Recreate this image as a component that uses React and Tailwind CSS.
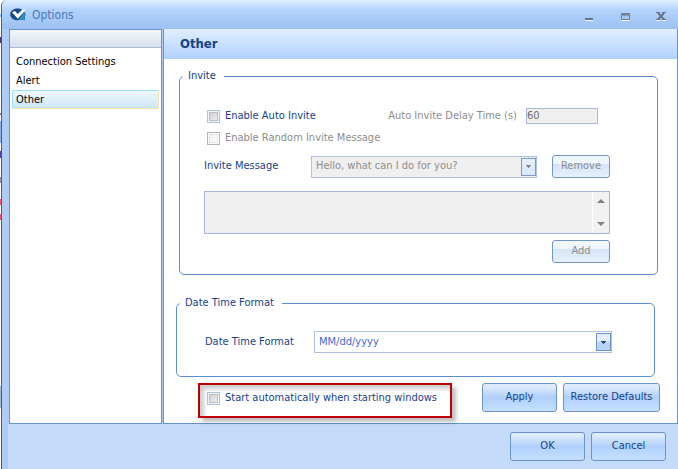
import React, { useState } from "react";
import clsx from "clsx";

const SECTIONS = ["Connection Settings", "Alert", "Other"];

// slivers of the window lying behind this one
const BACKDROP = [
    "h-[14px] bg-white",
    "h-[3px] bg-blue-300",
    "h-[20px] bg-white",
    "h-[6px] bg-[#4a3a6a]",
    "h-[70px] bg-white",
    "h-[2px] bg-[#7a8898]",
    "h-[6px] bg-white",
    "h-[22px] bg-[#8fb4e8]",
    "h-[8px] bg-white",
    "h-[7px] bg-[#4a3fb0]",
    "h-[19px] bg-white",
    "h-[6px] bg-[#8e959e]",
    "h-[16px] bg-white",
    "h-[6px] bg-[#ef5a70]",
    "h-[9px] bg-white",
    "h-[6px] bg-[#ef5a70]",
    "h-[166px] bg-white",
    "h-[22px] bg-[#a9bddb]",
    "grow bg-white",
];

function Logo() {
    return (
        <svg width="16" height="14" viewBox="0 0 16 14" aria-hidden="true">
            <path
                d="M7.500 .6C3.400 .6 .3 3 .3 6.400s3.100 5.800 7.200 5.800c1.300 0 2.500-.2 3.500-.6l4 .7-.4-3c.5-.9 .8-1.900 .8-2.900C15.400 3 11.600 .6 7.500 .6z"
                fill="#174a88"
            />
            <path
                d="M8.500 12.100c1-.1 1.800-.3 2.500-.5l4 .7-.4-3c.6-1 .8-2 .8-2.900 0-1.200-.4-2.200-1-3z"
                fill="#2f8fbd"
            />
            <path
                d="M2 4.300l3-1.200 2.700 3L13 1l2.400 1.300-7.600 8.400z"
                fill="#fff"
            />
        </svg>
    );
}

function TitleBar() {
    return (
        <header className="flex h-[29px] shrink-0 items-center bg-linear-to-b from-[#e2effe] via-[#b2d2fe] via-35% to-[#9cc0f0] pr-[9px] pl-2">
            <Logo />
            <h1 className="ml-[6px] text-[12px] leading-4 text-[#4a78c0]">
                Options
            </h1>
            <div className="ml-auto flex items-center gap-5">
                <button aria-label="Minimize" className="h-4 w-4">
                    <svg width="16" height="16" shapeRendering="crispEdges">
                        <rect x="4" y="11" width="8" height="2" fill="#68748a" />
                        <rect x="4" y="13" width="8" height="1" fill="#f4f8ff" />
                    </svg>
                </button>
                <button aria-label="Maximize" className="h-4 w-4">
                    <svg width="16" height="16" shapeRendering="crispEdges">
                        <rect x="4" y="6" width="9" height="7" fill="#74829a" />
                        <rect x="5" y="9" width="7" height="3" fill="#a6c6f2" />
                        <rect x="5" y="8" width="7" height="1" fill="#8d9bb0" />
                        <rect x="4" y="13" width="9" height="1" fill="#f4f8ff" />
                    </svg>
                </button>
                <button aria-label="Close" className="h-4 w-4">
                    <svg width="16" height="16" viewBox="0 0 16 16">
                        <path
                            d="M3 13.500h4M9 13.500h4"
                            stroke="#f4f8ff"
                        />
                        <path
                            d="M5 6l6 6.500M11 6l-6 6.500"
                            stroke="#68748a"
                            strokeWidth="2"
                        />
                        <path
                            d="M3 5.500h4M9 5.500h4M3 12.500h4M9 12.500h4"
                            stroke="#68748a"
                        />
                    </svg>
                </button>
            </div>
        </header>
    );
}

function Sidebar({ active, onSelect }) {
    return (
        <nav className="flex w-[153px] shrink-0 flex-col border border-[#6593cf] bg-white">
            <div className="h-[18px] border-b border-[#a9b8d3] bg-linear-to-b from-[#f4f7fb] to-[#d8dfec]" />
            <ul className="px-[2px] pt-[4px]">
                {SECTIONS.map((name) => (
                    <li key={name}>
                        <button
                            onClick={() => onSelect(name)}
                            className={clsx(
                                "block h-[19px] w-full rounded-[2px] border px-[3px] text-left leading-4 text-black",
                                active === name
                                    ? "border-[#99defd] border-r-[#efe3ac] border-b-[#efe3ac] bg-linear-to-b from-[#f0f8fd] to-[#cde6f5]"
                                    : "border-transparent"
                            )}
                        >
                            {name}
                        </button>
                    </li>
                ))}
            </ul>
        </nav>
    );
}

function CheckBox({ label, disabled, checked, onChange }) {
    return (
        <label
            className={clsx(
                "flex items-center gap-[5px] leading-4",
                disabled && "text-[#8d8d8d]"
            )}
        >
            <input
                type="checkbox"
                disabled={disabled}
                checked={checked}
                onChange={onChange}
                className="h-[13px] w-[13px] shrink-0 appearance-none border border-[#abc1de] bg-linear-to-br from-[#c3c7ce] to-[#f6f6f6] shadow-[inset_0_0_0_1px_#f4f4f4,inset_0_0_0_2px_#b9bec8] checked:bg-[#3f6cb4] disabled:border-[#b4b4b4] disabled:from-[#ececec] disabled:to-white disabled:shadow-[inset_0_0_0_1px_#fff,inset_0_0_0_2px_#e2e2e2]"
            />
            {label}
        </label>
    );
}

function ComboBox({ id, value, disabled }) {
    return (
        <div className="relative flex h-[22px] grow">
            <select
                id={id}
                disabled={disabled}
                defaultValue={value}
                className="h-full w-full appearance-none border border-[#abc1de] bg-white px-1 text-[#4668cf] opacity-100 disabled:bg-[#efefef] disabled:text-[#8d8d8d]"
            >
                <option>{value}</option>
            </select>
            <span
                className={clsx(
                    "pointer-events-none absolute top-[2px] right-[1px] flex h-[18px] w-[15px] items-center justify-center border bg-linear-to-b from-[#e4effd] from-45% to-50%",
                    disabled
                        ? "border-[#7a9bcb] to-[#dbe9fb]"
                        : "border-[#6f92c6] to-[#b5d3fb]"
                )}
            >
                <svg width="5" height="3" shapeRendering="crispEdges">
                    <path
                        d="M0 0h5v1H4v1H3v1H2V2H1V1H0z"
                        fill={disabled ? "#7f8794" : "#15428b"}
                    />
                </svg>
            </span>
        </div>
    );
}

function SmallButton({ children }) {
    return (
        <button
            disabled
            className="h-[23px] w-[58px] shrink-0 rounded-[3px] border border-[#7295c9] bg-linear-to-b from-[#f0f6fe] from-35% via-[#d6e4f7] via-40% to-[#e6f1fe] text-[#8d8d8d]"
        >
            {children}
        </button>
    );
}

function Button({ children, wide }) {
    return (
        <button
            className={clsx(
                "h-[29px] shrink-0 rounded-[3px] border border-[#6f92c6] bg-linear-to-b from-[#deebfd] from-10% via-[#b0d0fc] via-50% to-[#c6e0ff] text-[#15428b]",
                wide ? "w-[97px]" : "w-[75px]"
            )}
        >
            {children}
        </button>
    );
}

function Group({ title, className, children }) {
    return (
        <fieldset
            className={clsx("rounded-[5px] border border-[#5b8fd0]", className)}
        >
            <legend className="ml-[3px] pr-2 pl-[5px] leading-4">{title}</legend>
            {children}
        </fieldset>
    );
}

function InviteGroup() {
    const [autoInvite, setAutoInvite] = useState(false);

    return (
        <Group title="Invite" className="mr-[19px] ml-[15px]">
            <div className="flex flex-col pt-[23px] pr-[47px] pb-[10px] pl-6">
                <div className="flex h-[18px] items-center pr-3 pl-[3px]">
                    <CheckBox
                        label="Enable Auto Invite"
                        checked={autoInvite}
                        onChange={(e) => setAutoInvite(e.target.checked)}
                    />
                    <label
                        htmlFor="delay"
                        className="ml-auto text-[#8d8d8d]"
                    >
                        Auto Invite Delay Time (s)
                    </label>
                    <input
                        id="delay"
                        type="text"
                        disabled
                        defaultValue="60"
                        className="ml-[9px] h-4 w-[72px] border border-[#a9b6de] bg-[#efefef] text-[#6d6d6d]"
                    />
                </div>
                <div className="mt-[5px] flex h-4 items-center pl-[3px]">
                    <CheckBox label="Enable Random Invite Message" disabled />
                </div>
                <div className="mt-[9px] flex items-center">
                    <label htmlFor="message" className="w-[107px] shrink-0">
                        Invite Message
                    </label>
                    <ComboBox
                        id="message"
                        value="Hello, what can I do for you?"
                        disabled
                    />
                    <div className="ml-[15px] flex">
                        <SmallButton>Remove</SmallButton>
                    </div>
                </div>
                <div className="mt-[13px] flex h-[43px] border border-[#a3b5dc] bg-[#efefef]">
                    <textarea
                        aria-label="New invite message"
                        disabled
                        className="h-full grow resize-none"
                    />
                    <div className="flex w-[17px] shrink-0 flex-col items-center justify-between border-l border-white bg-[#f1f1f1] py-[7px]">
                        <svg width="8" height="4">
                            <path d="M4 0l4 4H0z" fill="#808080" />
                        </svg>
                        <svg width="8" height="4">
                            <path d="M0 0h8L4 4z" fill="#808080" />
                        </svg>
                    </div>
                </div>
                <div className="mt-[6px] flex justify-end pb-px">
                    <SmallButton>Add</SmallButton>
                </div>
            </div>
        </Group>
    );
}

function DateGroup() {
    return (
        <Group title="Date Time Format" className="mt-5 mr-[22px] ml-3">
            <div className="flex items-center pt-5 pr-[42px] pb-[23px] pl-7">
                <label htmlFor="format" className="w-[109px] shrink-0">
                    Date Time Format
                </label>
                <ComboBox id="format" value="MM/dd/yyyy" />
            </div>
        </Group>
    );
}

function OtherPanel() {
    const [autoStart, setAutoStart] = useState(false);

    return (
        <main className="ml-px flex grow flex-col border-r border-b border-l border-[#6593cf] bg-white">
            <h2 className="flex h-[30px] items-center bg-linear-to-b from-[#e2eefe] to-[#b0d2ff] pl-4 text-[13px] font-bold text-[#15428b]">
                Other
            </h2>
            <div className="grow pt-[9px]">
                <InviteGroup />
                <DateGroup />
                <div className="mt-[6px] mr-[17px] mb-[5px] ml-[34px] flex items-start gap-[6px]">
                    <div className="mr-auto border-2 border-[#c00000] py-[5px] pr-[13px] pl-[7px] shadow-[4px_4px_4px_rgba(0,0,0,0.25),inset_4px_4px_4px_rgba(0,0,0,0.2)]">
                        <div className="flex h-[21px] items-start">
                            <CheckBox
                                label="Start automatically when starting windows"
                                checked={autoStart}
                                onChange={(e) => setAutoStart(e.target.checked)}
                            />
                        </div>
                    </div>
                    <Button>Apply</Button>
                    <Button wide>Restore Defaults</Button>
                </div>
            </div>
        </main>
    );
}

export default function App() {
    const [section, setSection] = useState("Other");

    return (
        <div className="flex min-h-screen bg-white font-['DejaVu_Sans_Condensed','Noto_Sans',sans-serif] text-[11px] text-[#15428b]">
            <div className="flex w-px shrink-0 flex-col">
                {BACKDROP.map((part, i) => (
                    <div key={i} className={part} />
                ))}
            </div>
            <div className="flex grow flex-col overflow-hidden rounded-tl-[6px] border-l border-[#3c5f92] bg-[#c3daf9]">
                <TitleBar />
                <div className="flex grow bg-[#b0ccf4] pl-[7px]">
                    <Sidebar active={section} onSelect={setSection} />
                    <OtherPanel />
                </div>
                <footer className="flex h-[45px] shrink-0 justify-end gap-[6px] border-l-[6px] border-[#b0ccf4] pt-2 pr-3">
                    <Button>OK</Button>
                    <Button>Cancel</Button>
                </footer>
            </div>
        </div>
    );
}
